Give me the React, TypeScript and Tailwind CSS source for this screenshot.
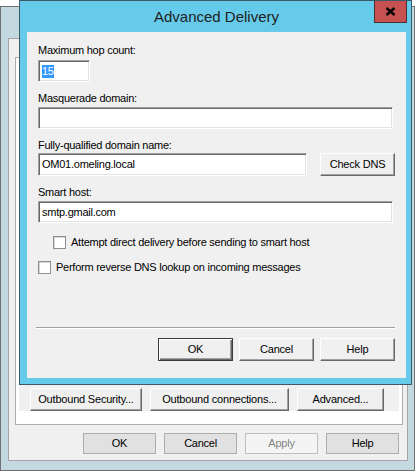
import React from "react";

function ClassicButton({ label, w = "w-[75px]", isDefault = false }: { label: string; w?: string; isDefault?: boolean }) {
  return (
    <button
      className={`${w} h-[23px] flex items-center justify-center bg-[#f0f0f0] text-[11px] tracking-[-0.2px] text-black ${
        isDefault
          ? "border border-[#3c3c3c] shadow-[inset_1px_1px_0_#ffffff,inset_-1px_-1px_0_#696969,inset_-2px_-2px_0_#a0a0a0]"
          : "border border-t-white border-l-white border-r-[#696969] border-b-[#696969] shadow-[inset_-1px_-1px_0_#a0a0a0]"
      }`}
    >
      {label}
    </button>
  );
}

function ModernButton({ label, disabled = false }: { label: string; disabled?: boolean }) {
  return (
    <button
      className={`w-[73px] h-[21px] flex items-center justify-center text-[11px] border ${
        disabled ? "bg-[#f4f4f4] border-[#bfbfbf] text-[#838383]" : "bg-[#e1e1e1] border-[#adadad] text-black"
      }`}
    >
      {label}
    </button>
  );
}

function Field({ value, w, h = "h-[22px]", selected = false }: { value?: string; w: string; h?: string; selected?: boolean }) {
  return (
    <div
      className={`${w} ${h} bg-white border border-t-[#a0a0a0] border-l-[#a0a0a0] border-r-white border-b-white shadow-[inset_1px_1px_0_#696969,inset_-1px_-1px_0_#e3e3e3] flex items-center px-[3px] text-[11px] text-black`}
    >
      {selected ? <span className="bg-[#3399ff] text-white leading-[13px]">{value}</span> : value}
    </div>
  );
}

function CheckBox({ label }: { label: string }) {
  return (
    <div className="flex items-center gap-[5px] text-[11px] text-black">
      <span className="w-[13px] h-[13px] bg-white border border-[#8e8f8f] shadow-[inset_1px_1px_0_#d6d6d6]" />
      <span>{label}</span>
    </div>
  );
}

export default function App() {
  return (
    <div className="relative w-[417px] h-[471px] bg-white overflow-hidden font-['Liberation_Sans',Arial,sans-serif] tracking-[-0.25px]">
      {/* main properties window behind */}
      <div className="mt-[6px] w-[415px] h-[465px] border border-[#707070] bg-[#c4d8e0] pl-[7px] pr-[6px] pb-[9px] pt-[31px] flex">
        <div className="flex-1 bg-[#f0f0f0] border border-[#a5a5a5] flex flex-col pl-[6px] pr-[4px]">
          <div className="h-[18px]" />
          <div className="h-[368px] border border-[#adadad] bg-white p-[3px] pb-[13px] flex">
            <div className="flex-1 bg-[#f0f0f0] flex items-end gap-[8px] pl-[11px]">
              <ClassicButton label="Outbound Security..." w="w-[112px]" />
              <ClassicButton label="Outbound connections..." w="w-[139px]" />
              <ClassicButton label="Advanced..." w="w-[87px]" />
            </div>
          </div>
          <div className="flex gap-[8px] pl-[68px] mt-[8px]">
            <ModernButton label="OK" />
            <ModernButton label="Cancel" />
            <ModernButton label="Apply" disabled />
            <ModernButton label="Help" />
          </div>
        </div>
      </div>

      {/* Advanced Delivery dialog */}
      <div className="absolute left-[19px] top-0 w-[393px] h-[385px] bg-[#66cbea] border border-[#3d5866] flex flex-col pl-[7px] pr-[5px] pb-[6px]">
        <div className="h-[31px] relative flex items-center justify-center">
          <span className="text-[15px] tracking-normal text-[#1e1e1e] pt-[1px]">Advanced Delivery</span>
          <div className="absolute right-[-1px] top-0 w-[33px] h-[22px] bg-[#c75050] border border-[#4a3030] border-t-0 flex items-center justify-center">
            <svg width="11" height="9" viewBox="0 0 11 9">
              <path d="M1.5 1 L9.5 8 M9.5 1 L1.5 8" stroke="#000" strokeWidth="2.4" />
            </svg>
          </div>
        </div>
        <div className="flex-1 bg-[#f0f0f0] flex flex-col pl-[11px] text-[11px] leading-[13px] text-black">
          <div className="mt-[12px]">Maximum hop count:</div>
          <div className="mt-[3px]">
            <Field value="15" w="w-[52px]" selected />
          </div>
          <div className="mt-[10px]">Masquerade domain:</div>
          <div className="mt-[2px]">
            <Field w="w-[355px]" />
          </div>
          <div className="mt-[10px]">Fully-qualified domain name:</div>
          <div className="mt-[1px] flex items-center gap-[13px]">
            <Field value="OM01.omeling.local" w="w-[269px]" h="h-[23px]" />
            <ClassicButton label="Check DNS" w="w-[75px]" />
          </div>
          <div className="mt-[10px]">Smart host:</div>
          <div className="mt-[2px]">
            <Field value="smtp.gmail.com" w="w-[355px]" />
          </div>
          <div className="mt-[13px] pl-[15px]">
            <CheckBox label="Attempt direct delivery before sending to smart host" />
          </div>
          <div className="mt-[12px]">
            <CheckBox label="Perform reverse DNS lookup on incoming messages" />
          </div>
          <div className="mt-[53px] ml-[-2px] w-[359px] h-[2px] border-t border-[#a0a0a0] border-b border-b-white" />
          <div className="mt-[9px] flex gap-[6px] pl-[120px]">
            <ClassicButton label="OK" isDefault />
            <ClassicButton label="Cancel" />
            <ClassicButton label="Help" />
          </div>
        </div>
      </div>
    </div>
  );
}
